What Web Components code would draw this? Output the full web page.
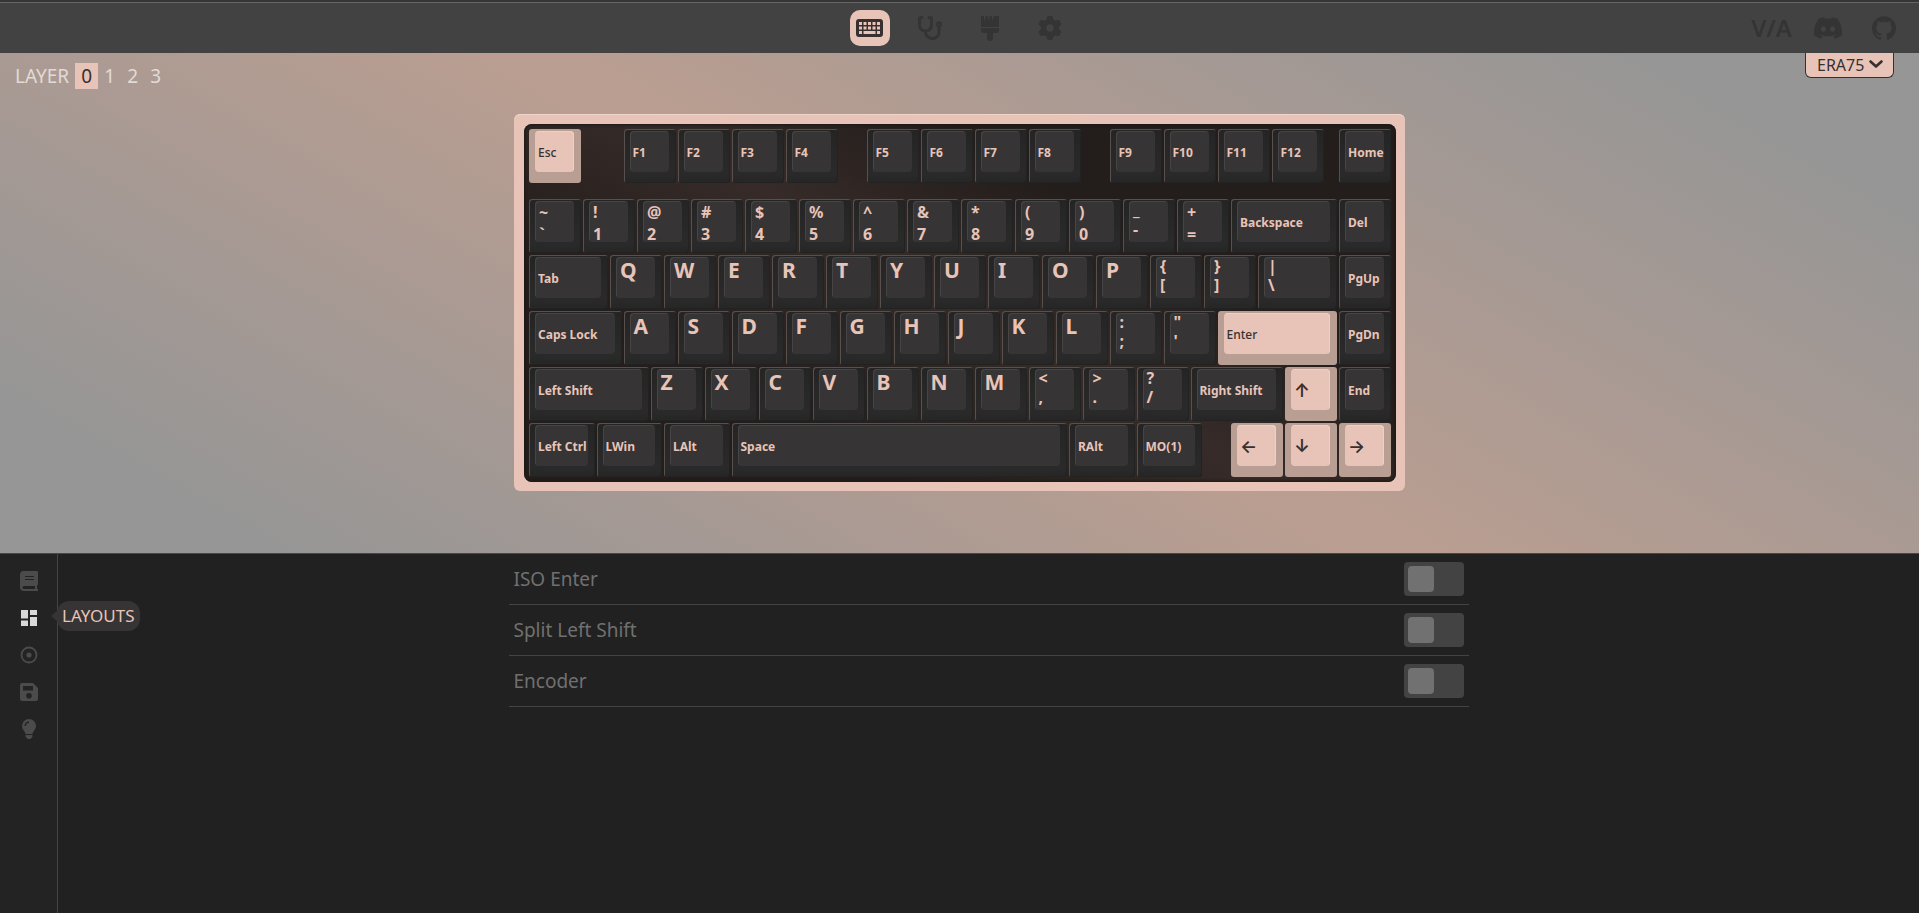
<!DOCTYPE html>
<html lang="en">
<head>
<meta charset="utf-8">
<title>VIA</title>
<style>
  html, body { margin: 0; height: 100%; background: #212121; }
  body { font-family: "Noto Sans", "Open Sans", sans-serif; font-size: 19px; color: #717070; }
</style>
</head>
<body>
<via-app></via-app>
<script>
const define = (name, html, setup) => {
  const template = document.createElement('template');
  template.innerHTML = html;
  customElements.define(name, class extends HTMLElement {
    connectedCallback() {
      if (this.shadowRoot) return;
      this.attachShadow({ mode: 'open' }).append(template.content.cloneNode(true));
      if (setup) setup(this, this.shadowRoot);
    }
  });
};

const ICONS = {
  keyboard: ['0 0 27 18', '<path fill-rule="evenodd" d="M3 0H24Q27 0 27 3V15Q27 18 24 18H3Q0 18 0 15V3Q0 0 3 0ZM3 3V6H6V3ZM7.500 3V6H10.500V3ZM12 3V6H15V3ZM16.500 3V6H19.500V3ZM21 3V6H24V3ZM3 7.500V10.500H6V7.500ZM7.500 7.500V10.500H10.500V7.500ZM12 7.500V10.500H15V7.500ZM16.500 7.500V10.500H19.500V7.500ZM21 7.500V10.500H24V7.500ZM3 12V15H6V12ZM7.500 12V15H19.500V12ZM21 12V15H24V12Z"/>'],
  stethoscope: ['0 0 512 512', '<path d="M447.1 112c-34.2.5-62.3 28.4-63 62.6-.5 24.3 12.5 45.6 32 56.8V344c0 57.3-50.2 104-112 104-60 0-109.2-44.1-111.9-99.2C265 333.8 320 269.200 320 192V36.6c0-11.400-8.100-21.300-19.300-23.500L237.800.5c-13-2.600-25.600 5.800-28.200 18.800L206.400 35c-2.600 13 5.800 25.600 18.800 28.200l30.700 6.100v121.400c0 52.900-42.200 96.700-95.100 97.200-53.400.5-96.900-42.700-96.900-96V69.400l30.700-6.100c13-2.600 21.400-15.200 18.800-28.200l-3.100-15.700C107.700 6.400 95.100-2 82.100.6L19.300 13C8.100 15.300 0 25.100 0 36.600V192c0 77.300 55.100 142 128.100 156.800C130.700 439.200 208.600 512 304 512c97 0 176-75.400 176-168V231.400c19.100-11.100 32-31.700 32-55.400 0-35.700-29.200-64.500-64.900-64zm.9 80c-8.800 0-16-7.200-16-16s7.200-16 16-16 16 7.200 16 16-7.200 16-16 16z"/>'],
  brush: ['0 0 20 26', '<path d="M1 1H4V7L6 1H8V6L10 1H12V6L14 1H19V12H1ZM1 13H19V15Q19 18 16 18H13V23Q13 26 10 26T7 23V18H4Q1 18 1 15Z"/>'],
  gear: ['0 0 512 512', '<path d="M495.900 166.600c3.200 8.700 .5 18.400-6.400 24.600l-43.300 39.400c1.100 8.300 1.700 16.800 1.700 25.400s-.6 17.100-1.700 25.400l43.300 39.400c6.900 6.200 9.600 15.900 6.400 24.600c-4.400 11.900-9.700 23.300-15.800 34.300l-4.700 8.100c-6.600 11-14 21.400-22.100 31.200c-5.900 7.200-15.700 9.600-24.500 6.800l-55.700-17.700c-13.400 10.300-28.200 18.900-44 25.400l-12.500 57.100c-2 9.100-9 16.300-18.200 17.800c-13.800 2.300-28 3.500-42.500 3.500s-28.700-1.200-42.500-3.500c-9.200-1.500-16.200-8.700-18.200-17.800l-12.500-57.100c-15.800-6.500-30.600-15.100-44-25.400L83.100 425.900c-8.800 2.800-18.600 .3-24.500-6.800c-8.100-9.800-15.500-20.200-22.100-31.200l-4.700-8.100c-6.100-11-11.400-22.400-15.800-34.300c-3.200-8.700-.5-18.400 6.400-24.600l43.300-39.400C64.600 273.100 64 264.600 64 256s.6-17.100 1.700-25.400L22.400 191.200c-6.900-6.200-9.600-15.900-6.400-24.600c4.400-11.900 9.700-23.300 15.800-34.300l4.700-8.100c6.600-11 14-21.400 22.100-31.200c5.900-7.200 15.700-9.600 24.500-6.800l55.700 17.700c13.400-10.300 28.200-18.900 44-25.400l12.500-57.100c2-9.100 9-16.300 18.200-17.800C227.300 1.200 241.500 0 256 0s28.700 1.200 42.500 3.500c9.200 1.500 16.200 8.700 18.200 17.800l12.500 57.100c15.800 6.500 30.600 15.100 44 25.400l55.700-17.700c8.800-2.800 18.600-.3 24.500 6.800c8.100 9.800 15.500 20.200 22.100 31.200l4.700 8.100c6.100 11 11.400 22.400 15.800 34.300zM256 336a80 80 0 1 0 0-160 80 80 0 1 0 0 160z"/>'],
  discord: ['0 0 24 24', '<path d="M20.317 4.370a19.791 19.791 0 0 0-4.885-1.515.074.074 0 0 0-.079.037c-.21.375-.444.864-.608 1.250a18.270 18.270 0 0 0-5.487 0 12.640 12.640 0 0 0-.617-1.250.077.077 0 0 0-.079-.037A19.736 19.736 0 0 0 3.677 4.370a.07.07 0 0 0-.032.027C.533 9.046-.32 13.580.099 18.058a.082.082 0 0 0 .031.057 19.900 19.900 0 0 0 5.993 3.030.078.078 0 0 0 .084-.028 14.090 14.090 0 0 0 1.226-1.994.076.076 0 0 0-.041-.106 13.107 13.107 0 0 1-1.872-.892.077.077 0 0 1-.008-.128 10.200 10.200 0 0 0 .372-.292.074.074 0 0 1 .077-.010c3.928 1.793 8.180 1.793 12.062 0a.074.074 0 0 1 .078.010c.12.098.246.198.373.292a.077.077 0 0 1-.006.127 12.299 12.299 0 0 1-1.873.892.077.077 0 0 0-.041.107c.36.698.772 1.362 1.225 1.993a.076.076 0 0 0 .084.028 19.839 19.839 0 0 0 6.002-3.030.077.077 0 0 0 .032-.054c.5-5.177-.838-9.674-3.549-13.660a.061.061 0 0 0-.031-.03zM8.020 15.330c-1.183 0-2.157-1.085-2.157-2.419 0-1.333.956-2.419 2.157-2.419 1.210 0 2.176 1.096 2.157 2.420 0 1.333-.956 2.418-2.157 2.418zm7.975 0c-1.183 0-2.157-1.085-2.157-2.419 0-1.333.955-2.419 2.157-2.419 1.210 0 2.176 1.096 2.157 2.420 0 1.333-.946 2.418-2.157 2.418z"/>'],
  github: ['0 0 24 24', '<path d="M12 .297c-6.630 0-12 5.373-12 12 0 5.303 3.438 9.800 8.205 11.385.6.113.82-.258.82-.577 0-.285-.010-1.040-.015-2.040-3.338.724-4.042-1.610-4.042-1.610C4.422 18.070 3.633 17.700 3.633 17.700c-1.087-.744.084-.729.084-.729 1.205.084 1.838 1.236 1.838 1.236 1.070 1.835 2.809 1.305 3.495.998.108-.776.417-1.305.76-1.605-2.665-.3-5.466-1.332-5.466-5.930 0-1.310.465-2.380 1.235-3.220-.135-.303-.54-1.523.105-3.176 0 0 1.005-.322 3.300 1.230.96-.267 1.980-.399 3-.405 1.020.006 2.040.138 3 .405 2.280-1.552 3.285-1.230 3.285-1.230.645 1.653.24 2.873.12 3.176.765.84 1.230 1.910 1.230 3.220 0 4.610-2.805 5.625-5.475 5.920.42.36.81 1.096.81 2.220 0 1.606-.015 2.896-.015 3.286 0 .315.21.69.825.57C20.565 22.092 24 17.592 24 12.297c0-6.627-5.373-12-12-12"/>'],
  chevron: ['0 0 14 8', '<path d="M1.500 1.500L7 6.500L12.500 1.500" fill="none" stroke="currentColor" stroke-width="2.600" stroke-linecap="round" stroke-linejoin="round"/>'],
  book: ['0 0 18 20', '<path fill-rule="evenodd" d="M4 0H17Q18 0 18 1V13Q18 14 17 14.500V18H18V20H4Q0 20 0 16V4Q0 0 4 0ZM5 5V6H14V5ZM5 8V9H14V8ZM4 15Q2.500 15 2.500 16.500T4 18H15V15Z"/>'],
  layouts: ['0 0 16 16', '<path d="M0 0H7V8.500H0ZM9 0H16V5H9ZM0 10.500H7V16H0ZM9 7H16V16H9Z"/>'],
  target: ['0 0 18 18', '<circle cx="9" cy="9" r="7.500" fill="none" stroke="currentColor" stroke-width="1.800"/><circle cx="9" cy="9" r="2.600"/>'],
  save: ['0 0 18 18', '<path fill-rule="evenodd" d="M2 0H13L18 5V16Q18 18 16 18H2Q0 18 0 16V2Q0 0 2 0ZM3 3V7.500H13V3ZM9 10A2.800 2.800 0 1 0 9 15.600A2.800 2.800 0 1 0 9 10Z"/>'],
  bulb: ['0 0 14 20', '<path fill-rule="evenodd" d="M7 0A7 7 0 0 1 14 7C14 10.500 11 12 10.500 15H3.500C3 12 0 10.500 0 7A7 7 0 0 1 7 0ZM7 2.500A4.500 4.500 0 0 0 2.500 7H4A3 3 0 0 1 7 4ZM3.500 16H10.500V17.500L8.500 20H5.500L3.500 17.500Z"/>']
};

define('via-icon', `
  <style>
    :host { display: block; line-height: 0; }
    svg { width: 100%; height: 100%; fill: currentColor; }
  </style>`,
  (el, root) => {
    const [box, body] = ICONS[el.getAttribute('name')];
    root.innerHTML += `<svg viewBox="${box}" aria-hidden="true">${body}</svg>`;
  });

define('via-header', `
  <style>
    :host { display: block; }
    header { display: grid; grid-template-columns: 1fr auto 1fr; align-items: center; height: 50px;
      background: #424242; border-top: 1px solid #666; margin-top: 2px; color: #343434; }
    nav { display: flex; gap: 20px; grid-column: 2; }
    button { all: unset; box-sizing: border-box; display: grid; place-items: center; width: 40px; height: 36px; border-radius: 10px; }
    .on { background: #e8c4b8; color: #363030; }
    .links { display: flex; justify-content: flex-end; align-items: center; gap: 30px; padding-right: 23px; }
    .group { display: flex; align-items: center; gap: 22px; }
    a { color: inherit; text-decoration: none; }
    .logo { font-size: 24px; line-height: 28px; font-weight: 600; }
    .s24 { width: 24px; height: 24px; }
    .kb { width: 27px; height: 18px; }
    .br { width: 20px; height: 26px; }
    .dc { width: 28px; height: 28px; }
  </style>
  <header>
    <nav aria-label="Main">
      <button class="on" aria-label="Configure"><via-icon class="kb" name="keyboard"></via-icon></button>
      <button aria-label="Key tester"><via-icon class="s24" name="stethoscope"></via-icon></button>
      <button aria-label="Design"><via-icon class="br" name="brush"></via-icon></button>
      <button aria-label="Settings"><via-icon class="s24" name="gear"></via-icon></button>
    </nav>
    <div class="links">
      <div class="group">
        <a class="logo" href="#via" aria-label="VIA">V/A</a>
        <a href="#discord" aria-label="Discord"><via-icon class="dc" name="discord"></via-icon></a>
      </div>
      <a href="#github" aria-label="GitHub"><via-icon class="s24" name="github"></via-icon></a>
    </div>
  </header>`);

define('layer-picker', `
  <style>
    :host { display: flex; align-items: center; gap: 6px; line-height: 26px; color: #e2dad6; }
    div { display: flex; }
    button { all: unset; width: 23px; height: 26px; text-align: center; }
    .on { background: #e8c4b8; color: #363030; }
  </style>
  <span>LAYER</span>
  <div><button class="on">0</button><button>1</button><button>2</button><button>3</button></div>`);

define('device-select', `
  <style>
    :host { display: grid; align-items: center; background: #e8c4b8; color: #363030;
      border: 1px solid #363030; border-top: 0; border-radius: 0 0 6px 6px; }
    select { all: unset; grid-area: 1 / 1; padding: 0 28px 0 11px; font-size: 16px; line-height: 24px; }
    via-icon { grid-area: 1 / 1; justify-self: end; width: 14px; height: 8px; margin: 0 10px 2px 0; pointer-events: none; }
  </style>
  <select aria-label="Keyboard"><option>ERA75</option></select>
  <via-icon name="chevron"></via-icon>`);

define('key-cap', `
  <style>
    :host { display: flex; margin: 0 2px 2px 0; height: 54px; }
    button { all: unset; box-sizing: border-box; flex: 1; display: flex; padding: 2px 7px 11px 6px; border-radius: 3px;
      background: linear-gradient(#252424, #2b2a2a 80%, #272626); color: #e8c4b8;
      box-shadow: inset 1px 1px #57504d, inset -1px -1px #222; }
    .cap { flex: 1; box-sizing: border-box; display: flex; flex-direction: column; justify-content: center; padding: 2px 0 0 3px;
      border-radius: 4px; background: #363434; box-shadow: inset 1px 1px #474443;
      font-size: 12px; line-height: 16px; font-weight: 700; white-space: nowrap; }
    :host([kind=letter]) .cap { justify-content: flex-start; padding: 0 0 0 4px; font-size: 21px; line-height: 27px; }
    :host([kind=number]) .cap { justify-content: flex-start; padding: 0 0 0 4px; font-size: 16px; line-height: 22px; }
    :host([kind=punct]) .cap { justify-content: flex-start; padding: 0 0 0 4px; font-size: 16px; line-height: 19px; }
    :host([accent]) button { background: #b99e94; color: #363030; box-shadow: none; }
    :host([accent]) .cap { background: #e8c4b8; font-weight: 500; box-shadow: inset -1px 1px #efd0c5; }
    :host([kind=arrow]) .cap { font-family: Inter, "DejaVu Sans", sans-serif; font-size: 18px; line-height: 20px; font-weight: 600; }
  </style>
  <button><span class="cap"></span></button>`,
  (el, root) => {
    const cap = root.querySelector('.cap');
    for (const text of el.getAttribute('legend').split(' | ')) {
      const line = document.createElement('span');
      line.textContent = text;
      cap.append(line);
    }
  });

define('key-board', `
  <style>
    :host { display: block; padding: 10px 9px 9px 10px; border-radius: 6px; background: #e8c4b8; box-shadow: inset 0 1px #f0d4ca; }
    .plate { padding: 5px 3px 3px 5px; border-radius: 8px;
      background: linear-gradient(30deg, #231d1b 25%, #362b28 50%, #231d1b 70%); box-shadow: inset 0 0 3px 1px #1c1818; }
    .keys { display: grid; width: 864px; grid-template-columns: repeat(64, 1fr); grid-template-rows: 70px; align-items: start; }
  </style>
  <div class="plate"><div class="keys"></div></div>`,
  (el, root) => {
    const L = s => [...s].map(c => [c, 1, 'letter']);
    const N = s => s.split(' ').map(p => [p[0] + ' | ' + p[1], 1, 'number']);
    const P = (s, w = 1) => [[s[0] + ' | ' + s[1], w, 'punct']];
    const A = s => [s, 1, 'arrow', true];
    // Each entry is [legend, width in key units, kind, accent]; a bare number is a gap.
    const rows = [
      [['Esc', 1, '', true], .75, ['F1', 1], ['F2', 1], ['F3', 1], ['F4', 1], .5, ['F5', 1], ['F6', 1], ['F7', 1], ['F8', 1], .5,
        ['F9', 1], ['F10', 1], ['F11', 1], ['F12', 1], .25, ['Home', 1]],
      [...N('~` !1 @2 #3 $4 %5 ^6 &7 *8 (9 )0'), ...P('_-'), ...N('+='), ['Backspace', 2], ['Del', 1]],
      [['Tab', 1.5], ...L('QWERTYUIOP'), ...P('{['), ...P('}]'), ...P('|\\', 1.5), ['PgUp', 1]],
      [['Caps Lock', 1.75], ...L('ASDFGHJKL'), ...P(':;'), ...P('"\''), ['Enter', 2.25, '', true], ['PgDn', 1]],
      [['Left Shift', 2.25], ...L('ZXCVBNM'), ...P('<,'), ...P('>.'), ...P('?/'), ['Right Shift', 1.75], A('↑'), ['End', 1]],
      [['Left Ctrl', 1.25], ['LWin', 1.25], ['LAlt', 1.25], ['Space', 6.25], ['RAlt', 1.25], ['MO(1)', 1.25], .5, A('←'), A('↓'), A('→')]
    ];
    const grid = root.querySelector('.keys');
    rows.forEach((row, r) => {
      let column = 1;
      for (const item of row) {
        if (typeof item === 'number') { column += item * 4; continue; }
        const [legend, width, kind, accent] = item;
        const key = document.createElement('key-cap');
        key.setAttribute('legend', legend);
        if (kind) key.setAttribute('kind', kind);
        if (accent) key.setAttribute('accent', '');
        key.style.gridArea = `${r + 1} / ${column} / auto / span ${width * 4}`;
        column += width * 4;
        grid.append(key);
      }
    });
  });

define('key-stage', `
  <style>
    :host { position: relative; display: flex; justify-content: center; padding: 61px 0 62px; border-bottom: 1px solid #484848;
      background: linear-gradient(30deg, #969696 10%, #bb9e91 50%, #969696 90%); }
    layer-picker { position: absolute; top: 10px; left: 15px; }
    device-select { position: absolute; top: 0; right: 25px; }
  </style>
  <key-board></key-board>
  <layer-picker></layer-picker>
  <device-select></device-select>`);

define('side-nav', `
  <style>
    :host { display: block; border-right: 1px solid #444; background: #232323; color: #4b4b4b; }
    nav { display: flex; flex-direction: column; align-items: center; padding: 8px 10px 0 0; width: 47px; }
    button { all: unset; position: relative; display: grid; place-items: center; width: 36px; height: 37px; margin-left: 11px; }
    via-icon { width: 18px; height: 20px; }
    .on { color: #d9d9d9; }
    .on via-icon { height: 16px; }
    .tip { position: absolute; left: 46px; top: 2px; padding: 0 5px; border-radius: 12px; background: #363434; color: #e8c4b8; line-height: 30px; font-size: 17px; }
    .tip::before { content: ""; position: absolute; left: -6px; top: 9px; border: solid transparent; border-width: 6px 7px 6px 0; border-right-color: #363434; }
  </style>
  <nav aria-label="Configure">
    <button aria-label="Keymap"><via-icon name="book"></via-icon></button>
    <button class="on"><via-icon name="layouts"></via-icon><span class="tip">LAYOUTS</span></button>
    <button aria-label="Macros"><via-icon name="target"></via-icon></button>
    <button aria-label="Save and load"><via-icon name="save"></via-icon></button>
    <button aria-label="Lighting"><via-icon name="bulb"></via-icon></button>
  </nav>`);

define('layout-option', `
  <style>
    :host { display: block; border-bottom: 1px solid #444; }
    label { display: flex; align-items: center; justify-content: space-between; height: 50px; padding: 0 5px; }
    input { appearance: none; box-sizing: border-box; display: flex; width: 60px; height: 34px; margin: 0; padding: 4px; border-radius: 4px; background: #434343; }
    input::before { content: ""; width: 26px; border-radius: 4px; background: #717171; }
    input:checked { justify-content: flex-end; }
  </style>
  <label><slot></slot></label>`,
  (el, root) => {
    const input = document.createElement('input');
    input.type = 'checkbox';
    input.setAttribute('role', 'switch');
    input.setAttribute('aria-label', el.textContent);
    root.querySelector('label').append(input);
  });

define('via-app', `
  <style>
    :host { display: grid; grid-template-rows: auto auto 1fr; min-height: 100vh; background: #353535; }
    main { display: grid; grid-template-columns: auto 1fr; background: #212121; }
    section { justify-self: center; width: 100%; max-width: 960px; }
  </style>
  <via-header></via-header>
  <key-stage></key-stage>
  <main>
    <side-nav></side-nav>
    <section>
      <layout-option>ISO Enter</layout-option>
      <layout-option>Split Left Shift</layout-option>
      <layout-option>Encoder</layout-option>
    </section>
  </main>`);
</script>
</body>
</html>
